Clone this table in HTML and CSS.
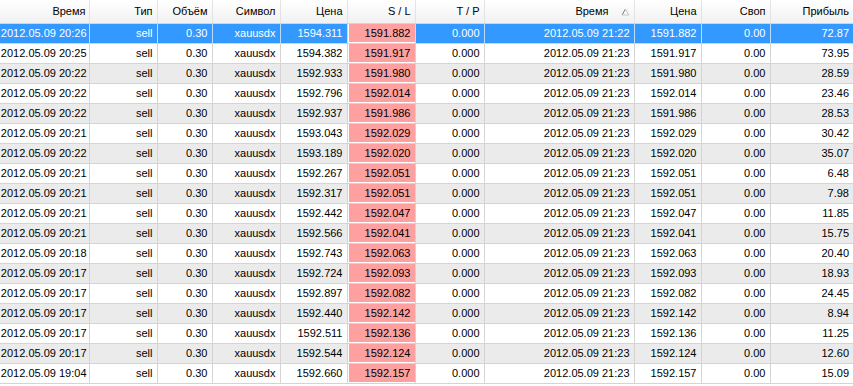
FILE: index.html
```html
<!DOCTYPE html>
<html>
<head>
<meta charset="utf-8">
<link rel="stylesheet" href="styles.css">
</head>
<body>
<table class="grid">
<colgroup>
<col class="c1"><col class="c2"><col class="c3"><col class="c4"><col class="c5"><col class="c6"><col class="c7"><col class="c8"><col class="c9"><col class="c10"><col class="c11">
</colgroup>
<thead>
<tr>
<th>Время</th><th>Тип</th><th>Объём</th><th>Символ</th><th>Цена</th><th>S / L</th><th>T / P</th>
<th class="sorted">Время<svg class="arrow" width="9" height="8" viewBox="0 0 9 8"><path d="M1 7 L4.5 1" stroke="#777" stroke-width="1" fill="none"/><path d="M4.5 1 L8 7 L1 7" stroke="#c8c8c8" stroke-width="1" fill="none"/></svg></th>
<th>Цена</th><th>Своп</th><th>Прибыль</th>
</tr>
</thead>
<tbody>
<tr class="sel"><td>2012.05.09 20:26</td><td>sell</td><td>0.30</td><td>xauusdx</td><td>1594.311</td><td class="sl">1591.882</td><td>0.000</td><td>2012.05.09 21:22</td><td>1591.882</td><td>0.00</td><td>72.87</td></tr>
<tr><td>2012.05.09 20:25</td><td>sell</td><td>0.30</td><td>xauusdx</td><td>1594.382</td><td class="sl">1591.917</td><td>0.000</td><td>2012.05.09 21:23</td><td>1591.917</td><td>0.00</td><td>73.95</td></tr>
<tr class="alt"><td>2012.05.09 20:22</td><td>sell</td><td>0.30</td><td>xauusdx</td><td>1592.933</td><td class="sl">1591.980</td><td>0.000</td><td>2012.05.09 21:23</td><td>1591.980</td><td>0.00</td><td>28.59</td></tr>
<tr><td>2012.05.09 20:22</td><td>sell</td><td>0.30</td><td>xauusdx</td><td>1592.796</td><td class="sl">1592.014</td><td>0.000</td><td>2012.05.09 21:23</td><td>1592.014</td><td>0.00</td><td>23.46</td></tr>
<tr class="alt"><td>2012.05.09 20:22</td><td>sell</td><td>0.30</td><td>xauusdx</td><td>1592.937</td><td class="sl">1591.986</td><td>0.000</td><td>2012.05.09 21:23</td><td>1591.986</td><td>0.00</td><td>28.53</td></tr>
<tr><td>2012.05.09 20:21</td><td>sell</td><td>0.30</td><td>xauusdx</td><td>1593.043</td><td class="sl">1592.029</td><td>0.000</td><td>2012.05.09 21:23</td><td>1592.029</td><td>0.00</td><td>30.42</td></tr>
<tr class="alt"><td>2012.05.09 20:22</td><td>sell</td><td>0.30</td><td>xauusdx</td><td>1593.189</td><td class="sl">1592.020</td><td>0.000</td><td>2012.05.09 21:23</td><td>1592.020</td><td>0.00</td><td>35.07</td></tr>
<tr><td>2012.05.09 20:21</td><td>sell</td><td>0.30</td><td>xauusdx</td><td>1592.267</td><td class="sl">1592.051</td><td>0.000</td><td>2012.05.09 21:23</td><td>1592.051</td><td>0.00</td><td>6.48</td></tr>
<tr class="alt"><td>2012.05.09 20:21</td><td>sell</td><td>0.30</td><td>xauusdx</td><td>1592.317</td><td class="sl">1592.051</td><td>0.000</td><td>2012.05.09 21:23</td><td>1592.051</td><td>0.00</td><td>7.98</td></tr>
<tr><td>2012.05.09 20:21</td><td>sell</td><td>0.30</td><td>xauusdx</td><td>1592.442</td><td class="sl">1592.047</td><td>0.000</td><td>2012.05.09 21:23</td><td>1592.047</td><td>0.00</td><td>11.85</td></tr>
<tr class="alt"><td>2012.05.09 20:21</td><td>sell</td><td>0.30</td><td>xauusdx</td><td>1592.566</td><td class="sl">1592.041</td><td>0.000</td><td>2012.05.09 21:23</td><td>1592.041</td><td>0.00</td><td>15.75</td></tr>
<tr><td>2012.05.09 20:18</td><td>sell</td><td>0.30</td><td>xauusdx</td><td>1592.743</td><td class="sl">1592.063</td><td>0.000</td><td>2012.05.09 21:23</td><td>1592.063</td><td>0.00</td><td>20.40</td></tr>
<tr class="alt"><td>2012.05.09 20:17</td><td>sell</td><td>0.30</td><td>xauusdx</td><td>1592.724</td><td class="sl">1592.093</td><td>0.000</td><td>2012.05.09 21:23</td><td>1592.093</td><td>0.00</td><td>18.93</td></tr>
<tr><td>2012.05.09 20:17</td><td>sell</td><td>0.30</td><td>xauusdx</td><td>1592.897</td><td class="sl">1592.082</td><td>0.000</td><td>2012.05.09 21:23</td><td>1592.082</td><td>0.00</td><td>24.45</td></tr>
<tr class="alt"><td>2012.05.09 20:17</td><td>sell</td><td>0.30</td><td>xauusdx</td><td>1592.440</td><td class="sl">1592.142</td><td>0.000</td><td>2012.05.09 21:23</td><td>1592.142</td><td>0.00</td><td>8.94</td></tr>
<tr><td>2012.05.09 20:17</td><td>sell</td><td>0.30</td><td>xauusdx</td><td>1592.511</td><td class="sl">1592.136</td><td>0.000</td><td>2012.05.09 21:23</td><td>1592.136</td><td>0.00</td><td>11.25</td></tr>
<tr class="alt"><td>2012.05.09 20:17</td><td>sell</td><td>0.30</td><td>xauusdx</td><td>1592.544</td><td class="sl">1592.124</td><td>0.000</td><td>2012.05.09 21:23</td><td>1592.124</td><td>0.00</td><td>12.60</td></tr>
<tr><td>2012.05.09 19:04</td><td>sell</td><td>0.30</td><td>xauusdx</td><td>1592.660</td><td class="sl">1592.157</td><td>0.000</td><td>2012.05.09 21:23</td><td>1592.157</td><td>0.00</td><td>15.09</td></tr>
</tbody>
</table>
</body>
</html>
```
FILE: styles.css
```css
html, body {
  margin: 0;
  padding: 0;
  background: #ffffff;
}
body {
  font-family: "Liberation Sans", Arial, sans-serif;
  font-size: 11px;
  color: #000;
  overflow: hidden;
}
.grid {
  border-collapse: collapse;
  table-layout: fixed;
  width: 853px;
}
.c1 { width: 89px; }
.c2 { width: 68px; }
.c3 { width: 55px; }
.c4 { width: 68px; }
.c5 { width: 67px; }
.c6 { width: 68px; }
.c7 { width: 69px; }
.c8 { width: 150px; }
.c9 { width: 67px; }
.c10 { width: 69px; }
.c11 { width: 83px; }
.grid th {
  height: 23px;
  padding: 0 4px 0 0;
  text-align: right;
  font-weight: normal;
  white-space: nowrap;
  background: linear-gradient(#ffffff, #f1f1f1);
  border-right: 1px solid #e3e3e3;
  border-bottom: 1px solid #d5d5d5;
  box-sizing: border-box;
}
.grid th:first-child { padding-right: 3px; }
.grid th:last-child { border-right: none; }
.grid th.sorted { padding-right: 4px; }
.arrow {
  margin-left: 12px;
  vertical-align: -1px;
}
.grid td {
  height: 20px;
  padding: 0 4px 0 0;
  text-align: right;
  white-space: nowrap;
  border-right: 1px solid #d4d4d4;
  border-bottom: 1px solid #d4d4d4;
  box-sizing: border-box;
}
.grid td:first-child { padding-right: 2px; }
.grid td:last-child { border-right: none; }
.grid tr.alt td { background: #ebebeb; }
.grid tr.sel td { background: #3399ff; color: #fff; border-right-color: #bcdcfd; border-bottom-color: #d4d4d4; }
.grid td.sl,
.grid tr.alt td.sl,
.grid tr.sel td.sl {
  background: #ffa0a0;
  color: #000;
  box-shadow: inset 1px 0 0 #ffffff, inset 0 -1px 0 #ffffff;
}
```
